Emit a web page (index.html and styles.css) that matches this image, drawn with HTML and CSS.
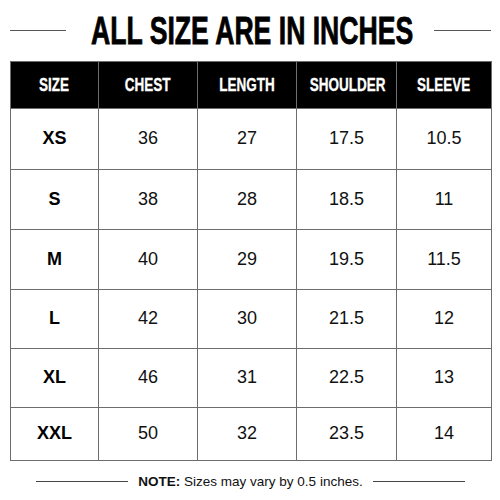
FILE: index.html
```html
<!DOCTYPE html>
<html>
<head>
<meta charset="utf-8">
<link rel="stylesheet" href="styles.css">
</head>
<body>
<div class="page">
  <div class="title-row">
    <span class="rule"></span>
    <div class="title-box"><h1 class="title">ALL SIZE ARE IN INCHES</h1></div>
    <span class="rule"></span>
  </div>
  <table class="chart">
    <colgroup>
      <col class="c1"><col class="c2"><col class="c3"><col class="c4"><col class="c5">
    </colgroup>
    <thead>
      <tr><th><span class="hd">SIZE</span></th><th><span class="hd">CHEST</span></th><th><span class="hd">LENGTH</span></th><th><span class="hd">SHOULDER</span></th><th><span class="hd">SLEEVE</span></th></tr>
    </thead>
    <tbody>
      <tr class="r1"><td class="size">XS</td><td>36</td><td>27</td><td>17.5</td><td>10.5</td></tr>
      <tr class="r2"><td class="size">S</td><td>38</td><td>28</td><td>18.5</td><td>11</td></tr>
      <tr class="r3"><td class="size">M</td><td>40</td><td>29</td><td>19.5</td><td>11.5</td></tr>
      <tr class="r4"><td class="size">L</td><td>42</td><td>30</td><td>21.5</td><td>12</td></tr>
      <tr class="r5"><td class="size">XL</td><td>46</td><td>31</td><td>22.5</td><td>13</td></tr>
      <tr class="r6"><td class="size">XXL</td><td>50</td><td>32</td><td>23.5</td><td>14</td></tr>
    </tbody>
  </table>
  <div class="note-row">
    <span class="note-rule"></span>
    <p class="note"><b>NOTE:</b> Sizes may vary by 0.5 inches.</p>
    <span class="note-rule"></span>
  </div>
</div>
</body>
</html>
```

FILE: styles.css
```css
html, body {
  margin: 0;
  padding: 0;
  background: #fff;
}
.page {
  width: 500px;
  height: 500px;
  box-sizing: border-box;
  padding: 0 9px 0 10px;
  font-family: "Liberation Sans", Arial, sans-serif;
  color: #111;
  overflow: hidden;
}
.title-row {
  display: grid;
  grid-template-columns: 56px minmax(0, 1fr) 57px;
  align-items: center;
  height: 61px;
}
.rule {
  height: 1.5px;
  background: #555;
}
.title-box {
  display: flex;
  justify-content: center;
  min-width: 0;
  padding-left: 5px;
}
.title {
  flex: none;
  margin: 0;
  font-family: "Liberation Sans", Arial, sans-serif;
  font-weight: 700;
  font-size: 38px;
  line-height: 1;
  color: #000;
  white-space: nowrap;
  transform: scaleX(0.70);
  -webkit-text-stroke: 0.8px #000;
}
.chart {
  width: 481px;
  border-collapse: collapse;
  table-layout: fixed;
  border: 1.5px solid #6d6d6d;
}
.c1 { width: 88px; }
.c2 { width: 99px; }
.c3 { width: 99px; }
.c4 { width: 100px; }
.c5 { width: 95px; }
.chart th {
  background: #000;
  color: #fff;
  height: 46px;
  padding: 0;
  border: 1.5px solid #6d6d6d;
  text-align: center;
  vertical-align: middle;
  white-space: nowrap;
}
.hd {
  display: inline-block;
  font-family: "Liberation Sans", Arial, sans-serif;
  font-weight: 700;
  font-size: 18px;
  transform: scaleX(0.75);
  -webkit-text-stroke: 0.3px #fff;
}
.chart td {
  padding: 0;
  text-align: center;
  vertical-align: middle;
  font-size: 18px;
  color: #111;
  border: 1.5px solid #6d6d6d;
}
.chart td.size {
  font-weight: 700;
  color: #000;
}
.r1 td { height: 59.5px; }
.r2 td { height: 59.5px; }
.r3 td { height: 58.5px; }
.r4 td { height: 58.5px; }
.r5 td { height: 57.5px; }
.r6 td { height: 52.5px; }
.note-row {
  display: flex;
  align-items: center;
  justify-content: center;
  gap: 10px;
  margin-top: 13px;
}
.note-rule {
  width: 92px;
  height: 1px;
  background: #444;
}
.note {
  margin: 0;
  font-size: 13.5px;
  color: #111;
  white-space: nowrap;
}
.note b {
  font-weight: 700;
}
```
